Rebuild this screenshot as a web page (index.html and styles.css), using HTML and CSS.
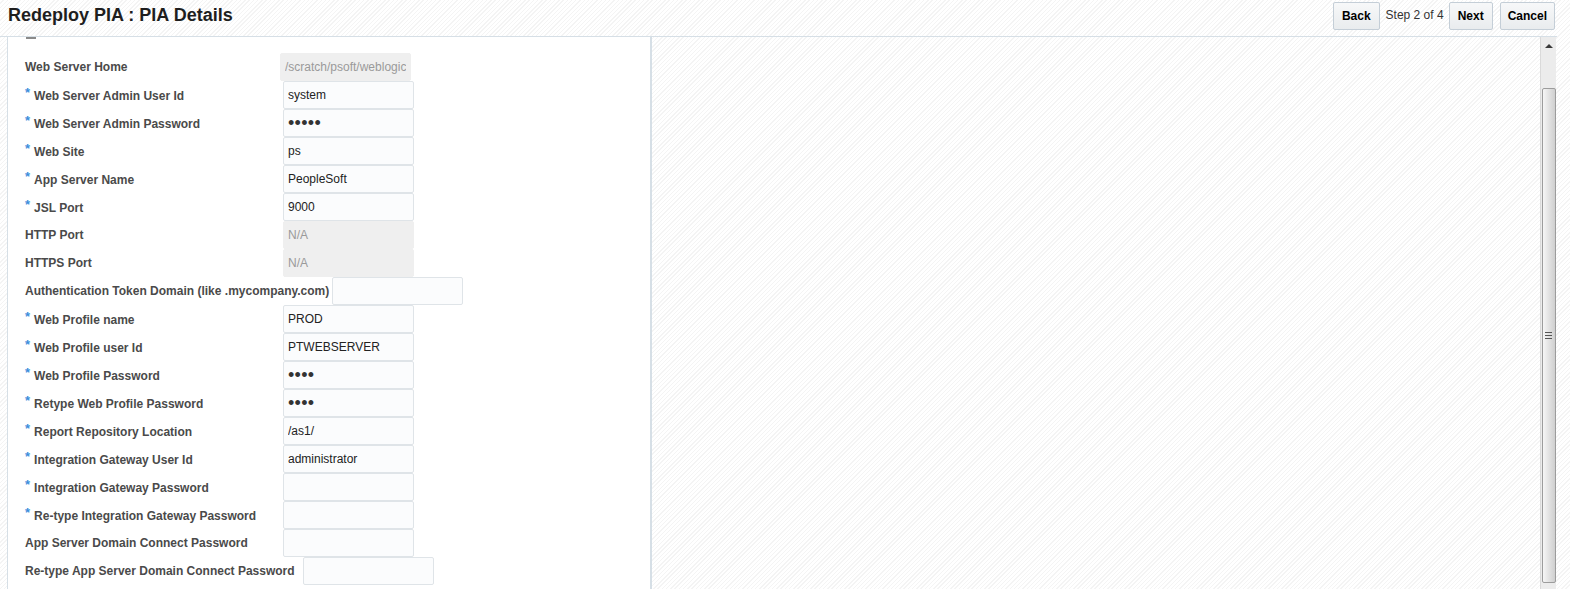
FILE: index.html
```html
<!DOCTYPE html>
<html lang="en">
<head>
    <meta charset="UTF-8">
    <title>Redeploy PIA : PIA Details</title>
    <link rel="stylesheet" href="styles.css">
</head>
<body>
    <div class="page">
        <header class="train-header">
            <h1>Redeploy PIA : PIA Details</h1>
            <div class="train-actions">
                <button class="btn">Back</button>
                <span class="step">Step 2 of 4</span>
                <button class="btn">Next</button>
                <button class="btn cancel">Cancel</button>
            </div>
        </header>
        <div class="body-area">
            <div class="form-pane">
                <div class="collapse-mark"></div>
                <div class="form-rows">
                    <div class="row">
                        <label>Web Server Home</label>
                        <input type="text" class="field home" value="/scratch/psoft/weblogic" disabled>
                    </div>
                    <div class="row">
                        <label><span class="req">*</span>Web Server Admin User Id</label>
                        <input type="text" class="field" value="system">
                    </div>
                    <div class="row">
                        <label><span class="req">*</span>Web Server Admin Password</label>
                        <input type="password" class="field" value="12345">
                    </div>
                    <div class="row">
                        <label><span class="req">*</span>Web Site</label>
                        <input type="text" class="field" value="ps">
                    </div>
                    <div class="row">
                        <label><span class="req">*</span>App Server Name</label>
                        <input type="text" class="field" value="PeopleSoft">
                    </div>
                    <div class="row">
                        <label><span class="req">*</span>JSL Port</label>
                        <input type="text" class="field" value="9000">
                    </div>
                    <div class="row">
                        <label>HTTP Port</label>
                        <input type="text" class="field" value="N/A" disabled>
                    </div>
                    <div class="row">
                        <label>HTTPS Port</label>
                        <input type="text" class="field" value="N/A" disabled>
                    </div>
                    <div class="row">
                        <label class="tight">Authentication Token Domain (like .mycompany.com)</label>
                        <input type="text" class="field" value="">
                    </div>
                    <div class="row">
                        <label><span class="req">*</span>Web Profile name</label>
                        <input type="text" class="field" value="PROD">
                    </div>
                    <div class="row">
                        <label><span class="req">*</span>Web Profile user Id</label>
                        <input type="text" class="field" value="PTWEBSERVER">
                    </div>
                    <div class="row">
                        <label><span class="req">*</span>Web Profile Password</label>
                        <input type="password" class="field" value="1234">
                    </div>
                    <div class="row">
                        <label><span class="req">*</span>Retype Web Profile Password</label>
                        <input type="password" class="field" value="1234">
                    </div>
                    <div class="row">
                        <label><span class="req">*</span>Report Repository Location</label>
                        <input type="text" class="field" value="/as1/">
                    </div>
                    <div class="row">
                        <label><span class="req">*</span>Integration Gateway User Id</label>
                        <input type="text" class="field" value="administrator">
                    </div>
                    <div class="row">
                        <label><span class="req">*</span>Integration Gateway Password</label>
                        <input type="password" class="field" value="">
                    </div>
                    <div class="row">
                        <label><span class="req">*</span>Re-type Integration Gateway Password</label>
                        <input type="password" class="field" value="">
                    </div>
                    <div class="row">
                        <label>App Server Domain Connect Password</label>
                        <input type="password" class="field" value="">
                    </div>
                    <div class="row">
                        <label>Re-type App Server Domain Connect Password</label>
                        <input type="password" class="field" value="">
                    </div>
                </div>
            </div>
            <div class="side-pane">
                <div class="scrollbar">
                    <div class="arrow-up"></div>
                    <div class="thumb">
                        <div class="grip"></div>
                    </div>
                </div>
            </div>
        </div>
    </div>
</body>
</html>
```

FILE: styles.css
```css
html, body {
    margin: 0;
    padding: 0;
    height: 589px;
    overflow: hidden;
}
body {
    font-family: Arial, "Liberation Sans", sans-serif;
    color: #333;
    background-color: #fcfcfc;
    background-image: repeating-linear-gradient(135deg, #ffffff 0px, #ffffff 2px, #f4f4f4 2px, #f4f4f4 3px);
}
.page {
    margin-right: 13px;
    height: 589px;
    display: flex;
    flex-direction: column;
}
.train-header {
    height: 36px;
    border-bottom: 1px solid #d6dfe6;
    display: flex;
    align-items: center;
    justify-content: space-between;
    padding-left: 8px;
    padding-right: 2px;
}
.train-header h1 {
    margin: 0;
    font-size: 18px;
    font-weight: bold;
    color: #1e1e1e;
    position: relative;
    top: -3px;
}
.train-actions {
    display: flex;
    align-items: center;
    position: relative;
    top: -2px;
}
.btn {
    font-family: Arial, "Liberation Sans", sans-serif;
    font-size: 12px;
    font-weight: bold;
    color: #000;
    height: 28px;
    padding: 0 8px;
    border: 1px solid #c4ced7;
    border-radius: 2px;
    background: linear-gradient(#f7f8f9, #e9ecee);
}
.cancel {
    margin-left: 7px;
    padding: 0 7px;
}
.step {
    font-size: 12px;
    color: #333;
    margin: -3px 5px 0 6px;
}
.body-area {
    flex: 1;
    display: flex;
    min-height: 0;
}
.form-pane {
    box-sizing: border-box;
    width: 645px;
    margin-left: 7px;
    background: #fff;
    border-left: 1px solid #d6dfe6;
    border-right: 2px solid #d6dfe6;
    padding-left: 17px;
}
.collapse-mark {
    width: 10px;
    height: 2px;
    margin-left: 1px;
    background: #8a8a8a;
}
.form-rows {
    margin-top: 14px;
    display: flex;
    flex-direction: column;
}
.row {
    height: 28px;
    display: flex;
    align-items: center;
}
.row label {
    min-width: 250px;
    padding-right: 8px;
    font-size: 12px;
    font-weight: bold;
    color: #4a4a4a;
    white-space: nowrap;
}
.row label.tight {
    padding-right: 3px;
}
.req {
    color: #3d8ddb;
    font-size: 13px;
    position: relative;
    top: -3px;
    margin-right: 4px;
}
.field {
    box-sizing: border-box;
    width: 131px;
    height: 28px;
    padding: 0 4px;
    font-family: Arial, "Liberation Sans", sans-serif;
    font-size: 12px;
    color: #222;
    background: #fbfcfd;
    border: 1px solid #dfe4e8;
    border-radius: 2px;
    outline: none;
}
.field[type="password"] {
    font-size: 18px;
    letter-spacing: 0.3px;
    color: #333;
}
.field:disabled {
    background: #efefef;
    border-color: #efefef;
    color: #9a9a9a;
}
.home {
    margin-left: -3px;
}
.side-pane {
    flex: 1;
    display: flex;
    justify-content: flex-end;
    padding-right: 1px;
}
.scrollbar {
    width: 15px;
    background: #ececec;
    border-left: 1px solid #dadada;
    display: flex;
    flex-direction: column;
    align-items: center;
}
.arrow-up {
    margin-top: 7px;
    width: 0;
    height: 0;
    border-left: 4px solid transparent;
    border-right: 4px solid transparent;
    border-bottom: 4px solid #3a3a3a;
}
.thumb {
    box-sizing: border-box;
    margin-top: 40px;
    width: 14px;
    height: 495px;
    border: 1px solid #9c9c9c;
    border-radius: 2px;
    background: linear-gradient(90deg, #f6f6f6, #e4e4e4 45%, #cfcfcf);
    display: flex;
    align-items: center;
    justify-content: center;
}
.grip {
    width: 7px;
    height: 7px;
    background: repeating-linear-gradient(#555 0px, #555 1px, transparent 1px, transparent 3px);
}
```
